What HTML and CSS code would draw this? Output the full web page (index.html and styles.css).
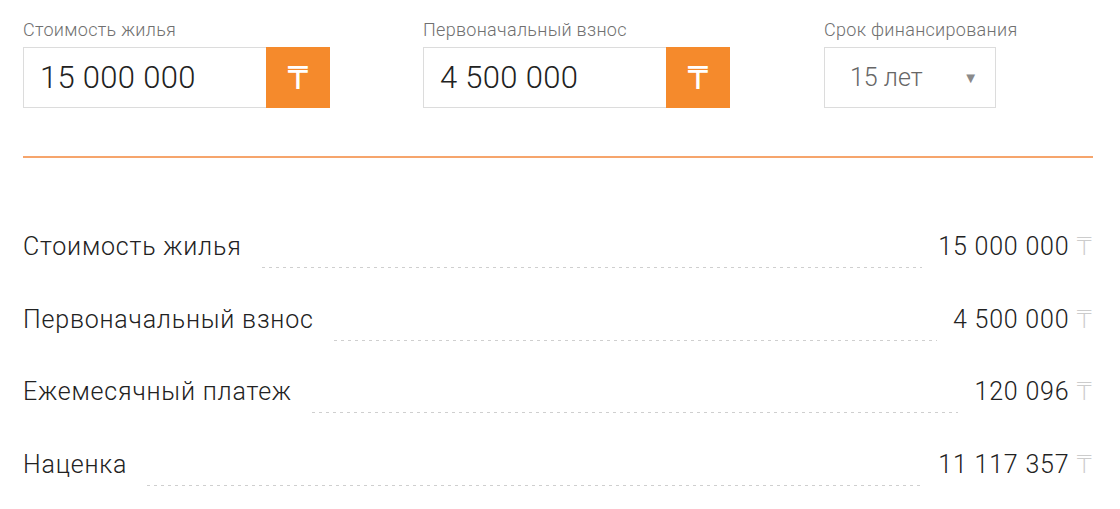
FILE: index.html
```html
<!DOCTYPE html>
<html lang="ru">
<head>
    <meta charset="UTF-8">
    <meta name="viewport" content="width=device-width, initial-scale=1.0">
    <title>Калькулятор финансирования</title>
    <link rel="stylesheet" href="styles.css">
</head>
<body>
    <div class="calc">
        <!-- Параметры -->
        <div class="fields">
            <div class="field">
                <label class="field-label">Стоимость жилья</label>
                <div class="input-group">
                    <div class="input">15 000 000</div>
                    <div class="currency-btn">₸</div>
                </div>
            </div>
            <div class="field">
                <label class="field-label">Первоначальный взнос</label>
                <div class="input-group">
                    <div class="input">4 500 000</div>
                    <div class="currency-btn">₸</div>
                </div>
            </div>
            <div class="field">
                <label class="field-label">Срок финансирования</label>
                <div class="select">
                    <span>15 лет</span>
                    <span class="arrow">▼</span>
                </div>
            </div>
        </div>

        <div class="divider"></div>

        <!-- Результаты -->
        <div class="results">
            <div class="row">
                <span class="row-label">Стоимость жилья</span>
                <span class="dots"></span>
                <span class="row-value">15 000 000 <span class="tenge">₸</span></span>
            </div>
            <div class="row">
                <span class="row-label">Первоначальный взнос</span>
                <span class="dots"></span>
                <span class="row-value">4 500 000 <span class="tenge">₸</span></span>
            </div>
            <div class="row">
                <span class="row-label">Ежемесячный платеж</span>
                <span class="dots"></span>
                <span class="row-value">120 096 <span class="tenge">₸</span></span>
            </div>
            <div class="row">
                <span class="row-label">Наценка</span>
                <span class="dots"></span>
                <span class="row-value">11 117 357 <span class="tenge">₸</span></span>
            </div>
        </div>
    </div>
</body>
</html>
```

FILE: styles.css
```css
/* Base */
body {
    margin: 0;
    background-color: #ffffff;
    font-family: Roboto, "DejaVu Sans", sans-serif;
    color: #333333;
}

.calc {
    padding: 20px 27px 0 23px;
}

/* Parameter fields */
.fields {
    display: grid;
    grid-template-columns: 400px 401px auto;
}

.field-label {
    display: block;
    font-size: 18px;
    font-weight: 300;
    letter-spacing: 0.3px;
    line-height: 20px;
    color: #707070;
    margin-bottom: 7px;
}

.input-group {
    display: flex;
    width: 307px;
    height: 61px;
}

.input {
    flex: 1;
    display: flex;
    align-items: center;
    padding-left: 16px;
    border: 1px solid #dcdcdc;
    border-right: none;
    font-size: 31px;
    font-weight: 300;
    letter-spacing: 0.3px;
    color: #222222;
}

.currency-btn {
    width: 64px;
    display: flex;
    justify-content: center;
    align-items: center;
    background-color: #f58a2c;
    color: #ffffff;
    font-size: 32px;
    font-weight: 400;
}

.select {
    display: flex;
    align-items: center;
    justify-content: space-between;
    box-sizing: border-box;
    width: 172px;
    height: 61px;
    padding: 0 17px 0 25px;
    border: 1px solid #dcdcdc;
    font-size: 25px;
    font-weight: 300;
    color: #666666;
}

.select .arrow {
    font-size: 15px;
    color: #8a8a8a;
}

/* Orange line */
.divider {
    height: 2px;
    margin-top: 48px;
    background-color: #f6a56c;
}

/* Results */
.results {
    padding-top: 74px;
}

.row {
    display: flex;
    align-items: flex-start;
    height: 72.5px;
}

.row-label,
.row-value {
    font-size: 25px;
    font-weight: 300;
    letter-spacing: 0.8px;
    line-height: 30px;
    color: #222222;
}

.dots {
    flex: 1;
    height: 36px;
    margin: 0 16px 0 20px;
    background: linear-gradient(to right, #cfcfcf 50%, transparent 0) left bottom / 7px 1px repeat-x;
}

.tenge {
    color: #cccccc;
}
```
